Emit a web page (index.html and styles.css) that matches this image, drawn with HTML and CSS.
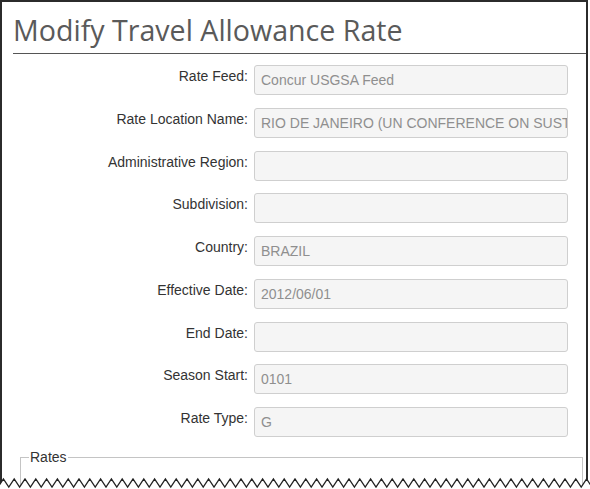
FILE: index.html
```html
<!DOCTYPE html>
<html>
<head>
<meta charset="utf-8">
<link rel="stylesheet" href="styles.css">
</head>
<body>
<div class="frame">
  <div class="header"><h1 class="title">Modify Travel Allowance Rate</h1></div>
  <div class="form">
    <div class="row"><label class="lbl">Rate Feed:</label><div class="field">Concur USGSA Feed</div></div>
    <div class="row"><label class="lbl">Rate Location Name:</label><div class="field">RIO DE JANEIRO (UN CONFERENCE ON SUSTAINABLE DEVELOPMENT)</div></div>
    <div class="row"><label class="lbl">Administrative Region:</label><div class="field"></div></div>
    <div class="row"><label class="lbl">Subdivision:</label><div class="field"></div></div>
    <div class="row"><label class="lbl">Country:</label><div class="field">BRAZIL</div></div>
    <div class="row"><label class="lbl">Effective Date:</label><div class="field">2012/06/01</div></div>
    <div class="row"><label class="lbl">End Date:</label><div class="field"></div></div>
    <div class="row"><label class="lbl">Season Start:</label><div class="field">0101</div></div>
    <div class="row"><label class="lbl">Rate Type:</label><div class="field">G</div></div>
  </div>
  <fieldset class="rates"><legend class="legend">Rates</legend><div class="rates-body"></div></fieldset>
</div>
<svg class="tear" width="590" height="16" viewBox="0 0 590 16">
  <path id="zz" fill="#fff" stroke="none" d=""/>
  <polyline id="zl" fill="none" stroke="#222" stroke-width="1.3" points=""/>
</svg>
<script>
(function(){
  var pts=[], p=10.8, top=4, bot=12, x=0;
  for (var i=0; x<600; i++){ x = -2 + i*p/2; pts.push([x, (i%2===0)?bot:top]); }
  var s = pts.map(function(a){return a[0].toFixed(1)+','+a[1];}).join(' ');
  document.getElementById('zl').setAttribute('points', s);
  document.getElementById('zz').setAttribute('d', 'M'+s.split(' ').join(' L')+' L600,16 L-2,16 Z');
})();
</script>
</body>
</html>
```

FILE: styles.css
```css
html, body {
  margin: 0;
  padding: 0;
  background: #fff;
  overflow: hidden;
}
body {
  width: 590px;
  height: 489px;
  position: relative;
  font-family: "Liberation Sans", Arial, sans-serif;
}
.frame {
  width: 584px;
  height: 487px;
  overflow: hidden;
  border: 2px solid #2b2b2b;
  border-bottom: none;
  box-sizing: content-box;
}
.header {
  margin-left: 11px;
  border-bottom: 1px solid #555;
  height: 51px;
}
.title {
  margin: 0;
  padding-top: 9px;
  font-family: "Open Sans", sans-serif;
  font-weight: 400;
  font-size: 28.6px;
  line-height: 38px;
  color: #5a5a5a;
}
.form {
  padding-top: 11px;
  display: flex;
  flex-direction: column;
  gap: 12.75px;
}
.row {
  display: flex;
  align-items: flex-start;
  gap: 6px;
}
.lbl {
  width: 246px;
  text-align: right;
  font-size: 14px;
  line-height: 18px;
  padding-top: 2px;
  color: #333;
}
.field {
  width: 314px;
  height: 30px;
  box-sizing: border-box;
  border: 1px solid #cfcfcf;
  border-radius: 3px;
  background: #f5f5f5;
  padding: 0 6px;
  font-size: 14px;
  line-height: 28px;
  color: #8f8f8f;
  white-space: nowrap;
  overflow: hidden;
}
.rates {
  margin: 12px 3px 0 18px;
  padding: 0;
  border: 1px solid #c4c4c4;
  border-bottom: none;
  min-width: 0;
}
.legend {
  margin-left: 8px;
  padding: 0 1px;
  font-size: 14px;
  line-height: 16px;
  color: #333;
}
.rates-body {
  height: 60px;
}
.tear {
  position: absolute;
  left: 0;
  top: 475px;
}
```
